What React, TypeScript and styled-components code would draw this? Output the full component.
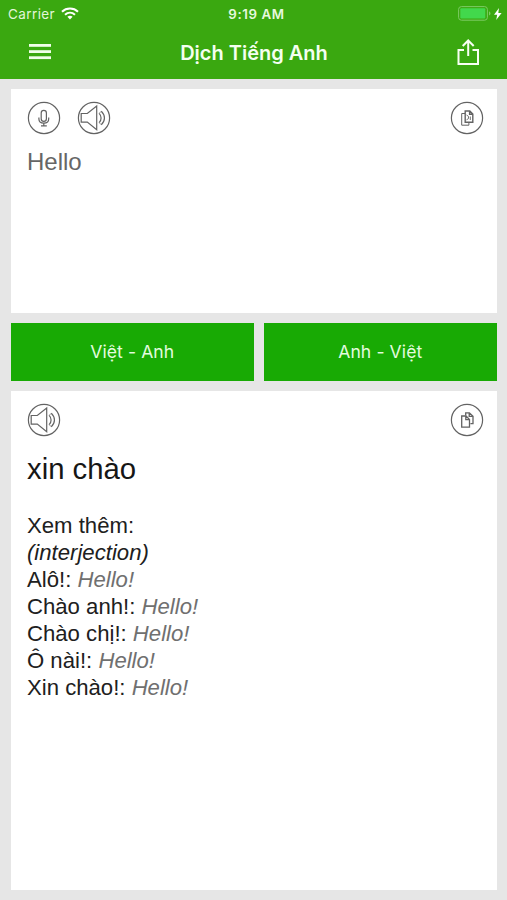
import React from "react";
import styled, { createGlobalStyle } from "styled-components";

const GlobalStyle = createGlobalStyle`
  * { box-sizing: border-box; }
  body { margin: 0; background: #e6e6e6; }
  button { appearance: none; border: 0; padding: 0; margin: 0; background: none; }
  svg { display: block; }
`;

const Screen = styled.div`
  width: 100%;
  height: 900px;
  display: flex;
  flex-direction: column;
  overflow: hidden;
  background: #e6e6e6;
  font-family: "Liberation Sans", Arial, sans-serif;
`;

const Header = styled.header`
  height: 79px;
  flex: none;
  background: #3aa810;
  color: #fff;
  font-family: Inter, sans-serif;
`;

const StatusBar = styled.div`
  height: 27px;
  display: grid;
  grid-template-columns: 1fr auto 1fr;
  align-items: center;
  padding: 0 5px 0 8px;
`;

const StatusLeft = styled.div`
  display: flex;
  align-items: center;
  gap: 6px;
  font-size: 13.5px;
  line-height: 16px;
  letter-spacing: 0.4px;
  color: #e2f6d9;
`;

const Clock = styled.div`
  padding-left: 3px;
  font-size: 13.3px;
  font-weight: 600;
  line-height: 16px;
  letter-spacing: 0.6px;
  color: #e6f8dd;
`;

const StatusRight = styled.div`
  display: flex;
  justify-content: flex-end;
  align-items: center;
  gap: 3px;
`;

const NavBar = styled.div`
  height: 52px;
  display: grid;
  grid-template-columns: 1fr auto 1fr;
  align-items: center;
  padding: 0 27px 0 28px;
`;

const Title = styled.h1`
  margin: 0;
  font-size: 20px;
  font-weight: 600;
  line-height: 26px;
  letter-spacing: 0;
  color: #f4fff0;
`;

const NavButton = styled.button<{ $end?: boolean }>`
  color: #fff;
  margin-bottom: 2px;
  justify-self: ${(p) => (p.$end ? "end" : "start")};
`;

const Main = styled.main`
  flex: 1;
  display: flex;
  flex-direction: column;
  gap: 9.5px;
  padding: 9.5px 10px 10px 10.5px;
`;

const Panel = styled.section<{ $height?: number }>`
  background: #fff;
  padding: 12.4px 13.5px 0 16.5px;
  ${(p) => (p.$height ? `height: ${p.$height}px; flex: none;` : "flex: 1;")}
`;

const Tools = styled.div`
  display: flex;
  gap: 16px;
  height: 34px;
`;

const RoundButton = styled.button<{ $end?: boolean }>`
  width: 34px;
  height: 34px;
  color: #636363;
  margin-left: ${(p) => (p.$end ? "auto" : "0")};
`;

const SourceText = styled.p`
  margin: 13.6px 0 0;
  font-size: 24px;
  line-height: 28px;
  color: #666;
`;

const Directions = styled.div`
  display: grid;
  grid-template-columns: 243.5px 1fr;
  gap: 9.5px;
  height: 58.5px;
  flex: none;
`;

const DirectionButton = styled.button`
  background: #18aa04;
  color: #e3fbdf;
  font-family: Inter, sans-serif;
  font-size: 17.6px;
  line-height: 24px;
  letter-spacing: 0.08px;
`;

const Result = styled.h2`
  margin: 15.6px 0 0;
  font-size: 29.3px;
  font-weight: 400;
  line-height: 34px;
  color: #161616;
`;

const More = styled.div`
  margin-top: 27px;
  font-size: 22.15px;
  line-height: 26.9px;
  color: #202020;
`;

const Line = styled.div`
  white-space: nowrap;
`;

const Meaning = styled.em`
  color: #707070;
`;

const entries = ["Alô!:", "Chào anh!:", "Chào chị!:", "Ô nài!:", "Xin chào!:"];

const WifiIcon = () => (
  <svg width="18" height="13" viewBox="0 0 18 13" fill="none" stroke="#fff" strokeWidth="2.1">
    <path d="M1 4.7C5.5.5 12.5.5 17 4.7" />
    <path d="M4 7.7C7 5.1 11 5.1 14 7.7" />
    <path d="M6.4 9.7C8 8.4 10 8.4 11.6 9.7L9 12.4z" fill="#fff" stroke="none" />
  </svg>
);

const BatteryIcon = () => (
  <svg width="33" height="15" viewBox="0 0 33 15">
    <rect x="0.6" y="0.6" width="28.8" height="13.6" rx="2.8" fill="none" stroke="#7dcb65" />
    <rect x="2.3" y="2.3" width="25" height="10.2" rx="1" fill="#42d84c" />
    <path d="M31 5.2c2 .8 2 3.6 0 4.4z" fill="#7dcb65" />
  </svg>
);

const BoltIcon = () => (
  <svg width="8" height="12" viewBox="0 0 8 12">
    <path d="M5 0L0 6.8h3.2L2.2 12 7.6 4.9H4.3z" fill="#fff" />
  </svg>
);

const MenuIcon = () => (
  <svg width="24" height="18" viewBox="0 0 24 18" fill="#f0ffea">
    <rect x="1" y="1" width="22" height="2.8" />
    <rect x="1" y="7.2" width="22" height="2.8" />
    <rect x="1" y="13.3" width="22" height="2.8" />
  </svg>
);

const ShareIcon = () => (
  <svg width="23" height="28" viewBox="0 0 23 28" fill="none" stroke="#f7fff3" strokeWidth="2">
    <path d="M7 12H1.5v14H21V12h-5.5M11.2 18V3M5.7 8l5.5-5.5L16.7 8" />
  </svg>
);

const RoundSvg = ({ children }: { children: React.ReactNode }) => (
  <svg width="34" height="34" viewBox="0 0 34 34" fill="none" stroke="currentColor" strokeWidth="1.2">
    <circle cx="17" cy="17" r="15.6" />
    {children}
  </svg>
);

const MicIcon = () => (
  <RoundSvg>
    <rect x="14.2" y="9.3" width="5.2" height="11" rx="2.6" />
    <path d="M11.9 16.5v1.5c0 5.5 9.8 5.5 9.8 0v-1.5M16.8 22.2v2.5M14 24.8h5.8" />
  </RoundSvg>
);

const SpeakerIcon = () => (
  <RoundSvg>
    <path d="M4.2 12.5h6.1L19.7 5v23.8l-9.4-7.7H4.2zM22.2 12.3c2.5 2.7 2.5 6.7 0 9.4M24.3 10.2c4.2 4 4.2 9.6 0 13.6" />
    <path d="M22.2 12.3l2.1-2.1M22.2 21.7l2.1 2.1" strokeWidth="0.7" />
  </RoundSvg>
);

const CopyIcon = ({ dense }: { dense?: boolean }) => (
  <RoundSvg>
    {dense ? (
      <>
        <path d="M15 12.5h-3.3v11.7h7.2v-3" strokeWidth="1" />
        <path d="M15.2 10h4.6l3 3v8.2h-7.6zM19.6 10v3.2h3.2" strokeWidth="1.4" />
        <path d="M16.5 14l2 1.4v2.2l-2 1.2M20.3 15.5v3.5" strokeWidth="0.9" />
      </>
    ) : (
      <>
        <path d="M11.7 13h4.3l3.5 3.5v7.6h-7.8zM15.8 13v3.7h3.7" strokeWidth="1.3" />
        <path d="M15.7 12.5v-2.6h3.7l3.6 3.4v7.4h-2.6M19.2 10v3.4H23" strokeWidth="1.3" />
      </>
    )}
  </RoundSvg>
);

export default function App() {
  return (
    <Screen>
      <GlobalStyle />
      <Header>
        <StatusBar>
          <StatusLeft>
            Carrier
            <WifiIcon />
          </StatusLeft>
          <Clock>9:19 AM</Clock>
          <StatusRight>
            <BatteryIcon />
            <BoltIcon />
          </StatusRight>
        </StatusBar>
        <NavBar>
          <NavButton aria-label="Menu">
            <MenuIcon />
          </NavButton>
          <Title>Dịch Tiếng Anh</Title>
          <NavButton $end aria-label="Share">
            <ShareIcon />
          </NavButton>
        </NavBar>
      </Header>
      <Main>
        <Panel $height={224.5}>
          <Tools>
            <RoundButton aria-label="Dictate">
              <MicIcon />
            </RoundButton>
            <RoundButton aria-label="Listen">
              <SpeakerIcon />
            </RoundButton>
            <RoundButton $end aria-label="Copy">
              <CopyIcon dense />
            </RoundButton>
          </Tools>
          <SourceText>Hello</SourceText>
        </Panel>
        <Directions>
          <DirectionButton>Việt - Anh</DirectionButton>
          <DirectionButton>Anh - Việt</DirectionButton>
        </Directions>
        <Panel>
          <Tools>
            <RoundButton aria-label="Listen">
              <SpeakerIcon />
            </RoundButton>
            <RoundButton $end aria-label="Copy">
              <CopyIcon />
            </RoundButton>
          </Tools>
          <Result>xin chào</Result>
          <More>
            <Line>Xem thêm:</Line>
            <Line>
              <em>(interjection)</em>
            </Line>
            {entries.map((entry) => (
              <Line key={entry}>
                {entry} <Meaning>Hello!</Meaning>
              </Line>
            ))}
          </More>
        </Panel>
      </Main>
    </Screen>
  );
}
